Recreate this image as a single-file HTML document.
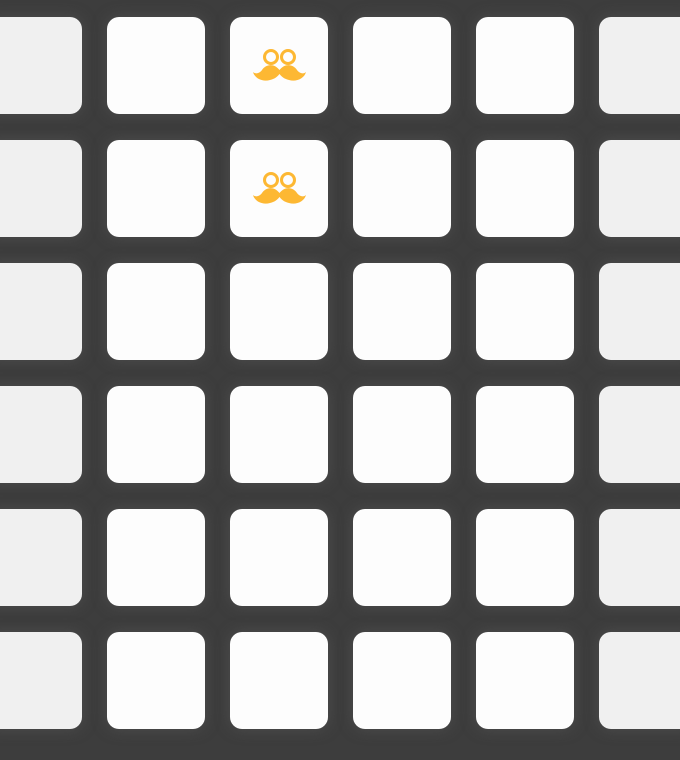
<!DOCTYPE html><html><head><style>
body{margin:0;width:680px;height:760px;overflow:hidden;background:#3d3d3d;position:relative}
.t{position:absolute;width:98px;height:97px;border-radius:12px;background:#fdfdfd;box-shadow:0 0 14px rgba(90,90,90,.6)}
.t.e{background:#f0f0f0}
svg{position:absolute}
</style></head><body>
<script>
const xs=[-16,107,230,353,476,599],ys=[17,140,263,386,509,632];
let h='';
for(const y of ys)for(let i=0;i<6;i++){h+=`<div class="t${i==0||i==5?' e':''}" style="left:${xs[i]}px;top:${y}px"></div>`;}
document.write(h);
</script>
<svg width="680" height="760" viewBox="0 0 680 760">
<g id="m" fill="none" stroke="#fdb833">
<circle cx="271" cy="57" r="6.5" stroke-width="3"/><circle cx="288" cy="57" r="6.5" stroke-width="3"/>
<path d="M279.5 70 C274 63 266 64 262 70 C259 74 255 74 253 72 C255 79 263 82 270 80 C275 79 278 76 279.5 74 C281 76 284 79 289 80 C296 82 304 79 306 72 C304 74 300 74 297 70 C293 64 285 63 279.5 70Z" fill="#fdb833" stroke="none"/>
</g>
<use href="#m" y="123"/>
</svg>
</body></html>
